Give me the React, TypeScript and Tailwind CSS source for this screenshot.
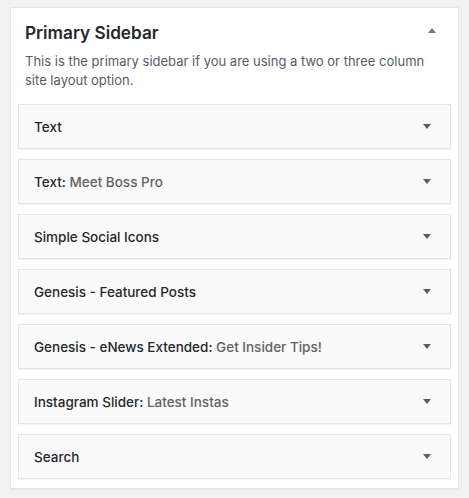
import React from "react";

const widgets: { name: string; title?: string }[] = [
  { name: "Text" },
  { name: "Text", title: "Meet Boss Pro" },
  { name: "Simple Social Icons" },
  { name: "Genesis - Featured Posts" },
  { name: "Genesis - eNews Extended", title: "Get Insider Tips!" },
  { name: "Instagram Slider", title: "Latest Instas" },
  { name: "Search" },
];

function Arrow({ up }: { up?: boolean }) {
  return (
    <svg width="8" height="5" viewBox="0 0 8 5" className="block">
      {up ? (
        <polygon points="0,5 8,5 4,0" fill="#72777c" />
      ) : (
        <polygon points="0,0 8,0 4,5" fill="#555d66" />
      )}
    </svg>
  );
}

export default function App() {
  return (
    <div
      className="min-h-[498px] bg-[#f1f1f1] pt-[7px] px-[10px] pb-[9px]"
      style={{ fontFamily: "Inter, 'Open Sans', 'Liberation Sans', sans-serif" }}
    >
      <div className="bg-white border border-[#e5e5e5] shadow-[0_1px_1px_rgba(0,0,0,0.04)] px-[7px] pb-[9px]">
        <div className="flex items-center justify-between pl-[7px] pr-[15px] pt-[13px]">
          <h2 className="text-[17.2px] font-semibold text-[#23282d] leading-[24px]">
            Primary Sidebar
          </h2>
          <div className="-mt-[6px]">
            <Arrow up />
          </div>
        </div>
        <p className="pl-[7px] pr-[10px] mt-[7px] text-[13px] leading-[19px] text-[#555d66]">
          This is the primary sidebar if you are using a two or three column site layout option.
        </p>
        <div className="mt-[14px] flex flex-col gap-[10px]">
          {widgets.map((w, i) => (
            <div
              key={i}
              className="h-[45px] bg-[#fafafa] border border-[#e5e5e5] shadow-[0_1px_1px_rgba(0,0,0,0.04)] flex items-center justify-between pl-[15px] pr-[19px]"
            >
              <span className="text-[13.5px] font-medium text-[#23282d] leading-[20px]">
                {w.name}
                {w.title ? (
                  <>
                    :{" "}
                    <span className="font-medium text-[#626262]">{w.title}</span>
                  </>
                ) : null}
              </span>
              <Arrow />
            </div>
          ))}
        </div>
      </div>
    </div>
  );
}
